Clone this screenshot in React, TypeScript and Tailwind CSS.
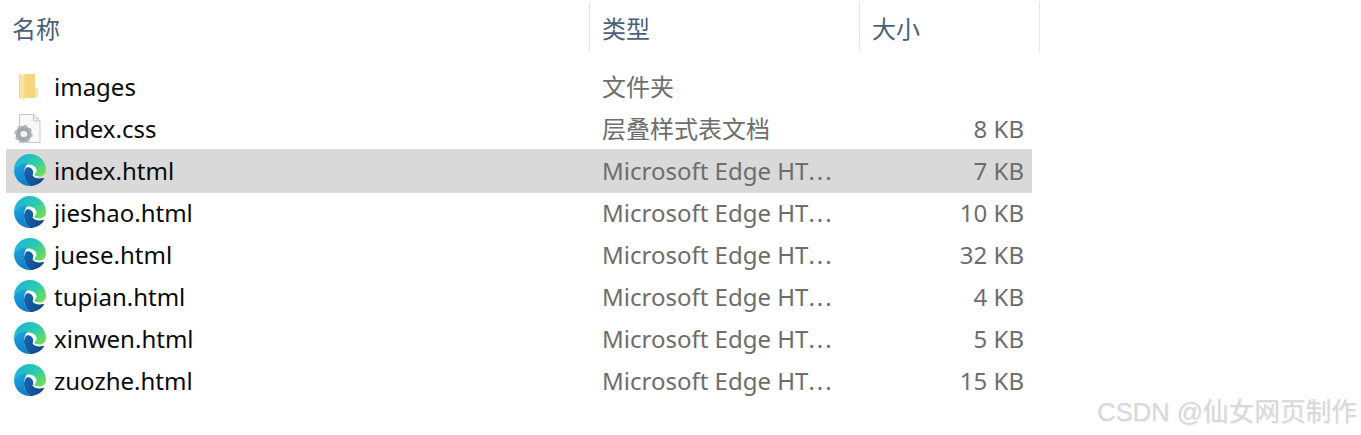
import React from 'react';

const files = [
  { name: 'images', type: '文件夹', size: '', icon: 'folder' },
  { name: 'index.css', type: '层叠样式表文档', size: '8 KB', icon: 'css' },
  { name: 'index.html', type: 'Microsoft Edge HT', more: true, size: '7 KB', icon: 'edge', selected: true },
  { name: 'jieshao.html', type: 'Microsoft Edge HT', more: true, size: '10 KB', icon: 'edge' },
  { name: 'juese.html', type: 'Microsoft Edge HT', more: true, size: '32 KB', icon: 'edge' },
  { name: 'tupian.html', type: 'Microsoft Edge HT', more: true, size: '4 KB', icon: 'edge' },
  { name: 'xinwen.html', type: 'Microsoft Edge HT', more: true, size: '5 KB', icon: 'edge' },
  { name: 'zuozhe.html', type: 'Microsoft Edge HT', more: true, size: '15 KB', icon: 'edge' },
];

const FolderIcon = () => (
  <svg width="34" height="34" viewBox="0 0 34 34">
    <path d="M11 4h11v24H11z" fill="#f6d67c" />
    <path d="M22 18h3v9h-3z" fill="#fae3a0" />
    <path d="M6 4l5.500 1v26L6 28z" fill="#fbe5a6" />
    <path d="M6 4h.8v24.300L6 28z" fill="#efd184" />
  </svg>
);

const CssIcon = () => (
  <svg width="34" height="34" viewBox="0 0 34 34">
    <path d="M6.500 2.500h14l6.500 6.500v21.500h-20.500z" fill="#f8f8f8" stroke="#c8c8c8" />
    <path d="M20.500 2.500v6.500h6.500z" fill="#ececec" stroke="#c8c8c8" />
    <circle cx="10.500" cy="22" r="5.500" fill="none" stroke="#a4a8ab" strokeWidth="5" />
    <circle cx="10.500" cy="22" r="8" fill="none" stroke="#b6babd" strokeWidth="2.400" strokeDasharray="3 3.300" />
    <circle cx="11.500" cy="22" r="2.800" fill="#f2f2f2" />
  </svg>
);

const EdgeIcon = () => (
  <svg width="34" height="34" viewBox="0 0 34 34">
    <defs>
      <linearGradient id="edgeTop" x1="0.1" y1="0.1" x2="1" y2="0.75">
        <stop offset="0" stopColor="#1cb4dc" />
        <stop offset="0.55" stopColor="#2ccbab" />
        <stop offset="1" stopColor="#72dd56" />
      </linearGradient>
      <linearGradient id="edgeLeft" x1="0.3" y1="0" x2="0.6" y2="1">
        <stop offset="0" stopColor="#1ea3de" />
        <stop offset="1" stopColor="#0c7ccc" />
      </linearGradient>
      <linearGradient id="edgeBottom" x1="0" y1="0" x2="1" y2="0.4">
        <stop offset="0" stopColor="#1268b3" />
        <stop offset="1" stopColor="#114a8b" />
      </linearGradient>
    </defs>
    <circle cx="20" cy="17" r="8" fill="#ffffff" />
    <path d="M1 16C1 7 8 0 17 0c9 0 16 7 16 16 0 4-3 6.500-6.500 6.500-2.500 0-4.500-.7-5.500-1.700 1.800-1.100 2.500-2.800 2.500-4.300 0-3.500-3.500-6-8.500-6C8 10.500 3 12 1 16z" fill="url(#edgeTop)" />
    <path d="M1 16c2-4 7-6.500 13.500-6.500C12 12 11 16 11 20c0 5 3 9.500 6 12C8 32 1 25 1 16z" fill="url(#edgeLeft)" />
    <path d="M11 20c0-2.500 1-5 2.500-6.500 2-.5 4 0 5.300 1.500 1.700 1.700 1.700 4.500.7 6.500 2 2.500 5.500 3.700 11 2.500.5-.1.800.2.500.7C28 29 23 32 17 32c-3-2.500-6-7-6-12z" fill="url(#edgeBottom)" />
  </svg>
);

const icons: Record<string, React.ReactNode> = {
  folder: <FolderIcon />,
  css: <CssIcon />,
  edge: <EdgeIcon />,
};

export default function App() {
  return (
    <div className="relative h-[435px] w-[1361px] overflow-hidden bg-white font-['Noto_Sans','Noto_Sans_CJK_SC',sans-serif] text-[24px]">
      <div className="flex h-[52px] pt-[2px] text-[#4c607a]">
        <div className="flex w-[590px] items-center border-r border-[#e5e5e5] pl-3 pt-[3px]">名称</div>
        <div className="flex w-[270px] items-center border-r border-[#e5e5e5] pl-3 pt-[3px]">类型</div>
        <div className="flex w-[180px] items-center border-r border-[#e5e5e5] pl-3 pt-[3px]">大小</div>
      </div>
      <div className="ml-[6px] mt-[14px] flex w-[1026px] flex-col">
        {files.map((f) => (
          <div key={f.name} className={`flex h-[42px] items-center ${f.selected ? 'bg-[#d9d9d9] shadow-[0_-1px_0_#d9d9d9,0_1px_0_#d9d9d9]' : ''}`}>
            <div className="flex w-[596px] items-center">
              <span className="ml-[7px] w-[41px] shrink-0">{icons[f.icon]}</span>
              <span className="text-[#0a0a0a]">{f.name}</span>
            </div>
            <span className="w-[340px] text-[#6d6d6d]">
              {f.type}
              {f.more && <span className="tracking-[2px]">...</span>}
            </span>
            <span className="ml-auto pr-2 text-[#6d6d6d]">{f.size}</span>
          </div>
        ))}
      </div>
      <div className="absolute bottom-[3px] right-[4px] font-['Liberation_Sans','Noto_Sans_CJK_SC',sans-serif] text-[25.700px] text-[#d8d8d8] [text-shadow:1px_1px_1px_#efefef]">CSDN @仙女网页制作</div>
    </div>
  );
}
